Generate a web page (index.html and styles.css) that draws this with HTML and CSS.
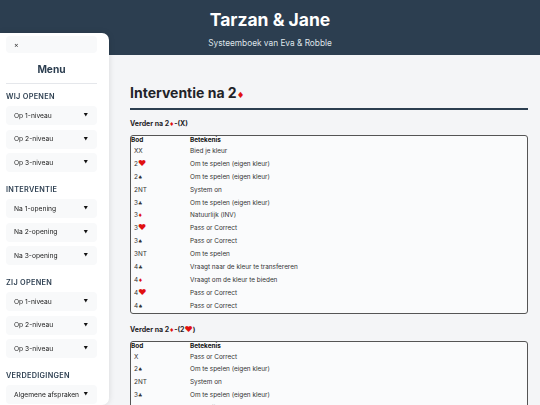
FILE: index.html
```html
<!DOCTYPE html>
<html lang="nl">
<head>
<meta charset="utf-8">
<title>Tarzan &amp; Jane</title>
<link rel="stylesheet" href="styles.css">
</head>
<body>
<header class="site-header">
  <h1 class="site-title">Tarzan &amp; Jane</h1>
  <p class="site-sub">Systeemboek van Eva &amp; Robble</p>
</header>

<aside class="sidebar">
  <button class="close-btn">×</button>
  <div class="menu-title">Menu</div>
  <hr class="menu-rule">
  <div class="menu-label">WIJ OPENEN</div>
  <div class="menu-group">
    <div class="menu-item"><span>Op 1-niveau</span><span class="caret">▼</span></div>
    <div class="menu-item"><span>Op 2-niveau</span><span class="caret">▼</span></div>
    <div class="menu-item"><span>Op 3-niveau</span><span class="caret">▼</span></div>
  </div>
  <div class="menu-label">INTERVENTIE</div>
  <div class="menu-group">
    <div class="menu-item"><span>Na 1-opening</span><span class="caret">▼</span></div>
    <div class="menu-item"><span>Na 2-opening</span><span class="caret">▼</span></div>
    <div class="menu-item"><span>Na 3-opening</span><span class="caret">▼</span></div>
  </div>
  <div class="menu-label">ZIJ OPENEN</div>
  <div class="menu-group">
    <div class="menu-item"><span>Op 1-niveau</span><span class="caret">▼</span></div>
    <div class="menu-item"><span>Op 2-niveau</span><span class="caret">▼</span></div>
    <div class="menu-item"><span>Op 3-niveau</span><span class="caret">▼</span></div>
  </div>
  <div class="menu-label">VERDEDIGINGEN</div>
  <div class="menu-group">
    <div class="menu-item"><span>Algemene afspraken</span><span class="caret">▼</span></div>
  </div>
</aside>

<main class="content">
  <h2 class="page-title">Interventie na 2<span class="red suit">♦</span></h2>

  <h3 class="sec-title">Verder na 2<span class="red suit-s">♦</span>-(X)</h3>
  <table class="bids">
    <thead><tr><th>Bod</th><th>Betekenis</th></tr></thead>
    <tbody>
      <tr><td>XX</td><td>Bied je kleur</td></tr>
      <tr><td>2<span class="heart">♥</span></td><td>Om te spelen (eigen kleur)</td></tr>
      <tr><td>2<span class="s-sm">♠</span></td><td>Om te spelen (eigen kleur)</td></tr>
      <tr><td>2NT</td><td>System on</td></tr>
      <tr><td>3<span class="s-sm">♣</span></td><td>Om te spelen (eigen kleur)</td></tr>
      <tr><td>3<span class="s-sm red">♦</span></td><td>Natuurlijk (INV)</td></tr>
      <tr><td>3<span class="heart">♥</span></td><td>Pass or Correct</td></tr>
      <tr><td>3<span class="s-sm">♠</span></td><td>Pass or Correct</td></tr>
      <tr><td>3NT</td><td>Om te spelen</td></tr>
      <tr><td>4<span class="s-sm">♣</span></td><td>Vraagt naar de kleur te transfereren</td></tr>
      <tr><td>4<span class="s-sm red">♦</span></td><td>Vraagt om de kleur te bieden</td></tr>
      <tr><td>4<span class="heart">♥</span></td><td>Pass or Correct</td></tr>
      <tr><td>4<span class="s-sm">♠</span></td><td>Pass or Correct</td></tr>
    </tbody>
  </table>

  <h3 class="sec-title">Verder na 2<span class="red suit-s">♦</span>-(2<span class="heart-t">♥</span>)</h3>
  <table class="bids">
    <thead><tr><th>Bod</th><th>Betekenis</th></tr></thead>
    <tbody>
      <tr><td>X</td><td>Pass or Correct</td></tr>
      <tr><td>2<span class="s-sm">♠</span></td><td>Om te spelen (eigen kleur)</td></tr>
      <tr><td>2NT</td><td>System on</td></tr>
      <tr><td>3<span class="s-sm">♣</span></td><td>Om te spelen (eigen kleur)</td></tr>
      <tr><td>3<span class="s-sm red">♦</span></td><td>Natuurlijk (INV)</td></tr>
      <tr><td>3<span class="heart">♥</span></td><td>Pass or Correct</td></tr>
    </tbody>
  </table>
</main>
</body>
</html>
```

FILE: styles.css
```css
* { box-sizing: border-box; }
html, body { margin: 0; padding: 0; }
body {
  font-family: Inter, "Noto Sans", "DejaVu Sans", sans-serif;
  background: #f4f5f7;
  color: #222;
  overflow: hidden;
}

.site-header {
  background: #2c3e50;
  height: 55px;
  text-align: center;
  color: #fff;
  padding-top: 9px;
}
.site-title {
  margin: 0;
  font-size: 17.5px;
  line-height: 22px;
  font-weight: 700;
}
.site-sub {
  margin: 7px 0 0;
  font-size: 8.3px;
  line-height: 10px;
  color: #dfe4ea;
}

.sidebar {
  position: fixed;
  left: 0;
  top: 33px;
  width: 109px;
  height: 372px;
  background: #fff;
  border-radius: 0 7px 7px 0;
  box-shadow: 0 0 6px rgba(0, 0, 0, 0.12);
  padding: 3px 12px 0 6px;
}
.close-btn {
  display: block;
  width: 100%;
  height: 17px;
  border: 0;
  border-radius: 4px;
  background: #f8f9fa;
  text-align: left;
  padding: 0 0 0 8px;
  font-family: inherit;
  font-size: 7px;
  color: #333;
}
.menu-title {
  margin-top: 9px;
  text-align: center;
  font-weight: 700;
  font-size: 10.2px;
  line-height: 14px;
  color: #2c3e50;
}
.menu-rule {
  margin: 7px 0 0;
  border: 0;
  border-top: 1px solid #e5e7eb;
}
.menu-label {
  margin-top: 8px;
  font-size: 7.3px;
  line-height: 10px;
  font-weight: 600;
  letter-spacing: 0.3px;
  color: #2c3e50;
}
.menu-group + .menu-label { margin-top: 13px; }
.menu-group {
  margin-top: 4px;
  display: flex;
  flex-direction: column;
  gap: 4.5px;
}
.menu-item {
  height: 19px;
  border-radius: 4px;
  background: #f8f9fa;
  display: flex;
  align-items: center;
  justify-content: space-between;
  padding: 0 9px 0 8px;
  font-size: 6.7px;
  color: #222;
}
.caret { font-size: 4.5px; color: #111; }

.content {
  padding: 29px 12px 0 130px;
}
.page-title {
  margin: 0;
  font-size: 14px;
  line-height: 18px;
  font-weight: 700;
  color: #1f2328;
  padding-bottom: 4px;
  border-bottom: 2px solid #2c3e50;
}
.red { color: #e01010; }
.suit { font-size: 8.5px; }
.suit-s { font-size: 5.5px; }
.heart-t { color: #e01010; font-size: 8px; line-height: 0; }

.sec-title {
  margin: 9px 0 6px;
  font-size: 7px;
  line-height: 10px;
  font-weight: 700;
  color: #1f2328;
}
.bids + .sec-title { margin-top: 11px; }

.bids {
  width: 100%;
  border: 1px solid #555;
  border-radius: 3px;
  border-spacing: 0;
  background: #fafbfc;
  font-size: 6.4px;
}
.bids th {
  text-align: left;
  font-weight: 700;
  padding: 0;
  height: 9px;
  line-height: 9px;
  color: #111;
}
.bids th:first-child { width: 59px; }
.bids td {
  padding: 0;
  height: 12.9px;
  line-height: 9px;
  color: #333;
}
.bids td:first-child { padding-left: 3px; }
.heart { color: #e01010; font-size: 8px; line-height: 0; }
.s-sm { font-size: 5px; line-height: 0; }
```
